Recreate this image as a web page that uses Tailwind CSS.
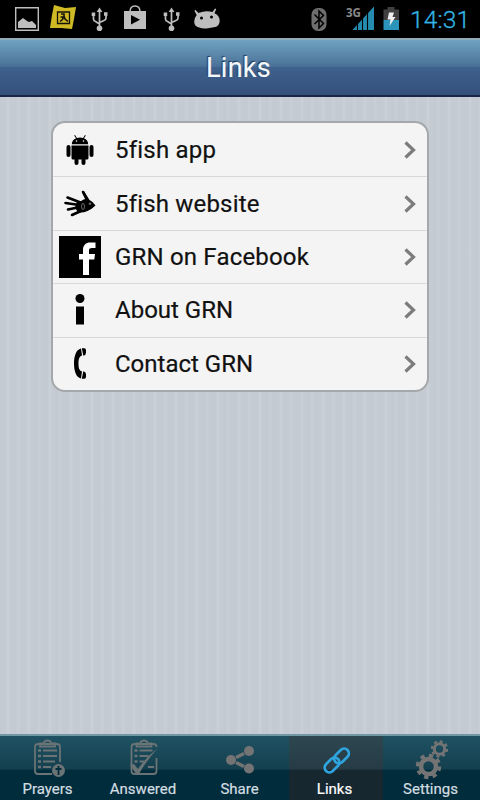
<!DOCTYPE html>
<html lang="en" class="bg-black">
<head>
  <meta charset="UTF-8" />
  <meta name="viewport" content="width=device-width, initial-scale=1.0" />
  <title>Links</title>
  <script src="https://cdn.jsdelivr.net/npm/@tailwindcss/browser@4"></script>
</head>
<body class="w-[480px] h-[800px] flex flex-col overflow-hidden font-[Roboto,sans-serif]">

  <!-- Status bar -->
  <div class="h-[38px] shrink-0 bg-black flex">
    <svg class="w-[240px] h-[38px]" viewBox="0 0 240 38">
      <path d="M15.700 7.700h22.600v22.600H15.700z" fill="none" stroke="#bebebe" stroke-width="1.400" />
      <path d="M18 28v-6l5-4 4 3 2 1 3-1 4 4v3z" fill="#bebebe" />
      <path d="M54 5l11 3 11-1-2 12-2 10-11-1-11 0 2-13z" fill="#cfba25" />
      <path d="M57.500 12h12v11.500h-12z" fill="none" stroke="#15130a" stroke-width="1.300" />
      <path d="M61 14h3v2l1 3 3 2.500M63.500 16.500l-1 3-2.500 2M60.500 17h4" fill="none" stroke="#15130a" stroke-width="1.600" />
      <g id="usb" fill="none" stroke="#bebebe" stroke-width="1.700">
        <path d="M99.500 10v18M93.500 15v4q0 2 2 2.500l4 2.500M106 15v3q0 2-2 2.500l-4.500 2" />
        <path d="M96.600 12l2.900-4.500 2.900 4.500zM91.700 12.500h3.500V16h-3.500zM104 12.300h3.500v3.500H104z" fill="#bebebe" stroke="none" />
        <circle cx="99.500" cy="28.200" r="2.800" fill="#bebebe" stroke="none" />
      </g>
      <use href="#usb" x="72" />
      <path d="M124 11h22v18h-22z" fill="#bebebe" />
      <path d="M130 12q0-6 5-6t5 6" fill="none" stroke="#bebebe" stroke-width="1.500" />
      <path d="M131 15v9.500l9-4.700z" fill="#000" />
      <path d="M195.300 9.800l3.200 3.200q7-3 14-1l2.500-3.500 1.200.600-1.700 4.200q5 2.200 5.200 7.200 0 6.500-6 6.700-3 .3-5.500 1-5 1-9-.7-5-1-5-6 0-3.500 2.500-6.500l-2.200-4z" fill="#bebebe" />
      <circle cx="201.500" cy="18" r="1.500" fill="#000" />
      <circle cx="211.500" cy="17" r="1.500" fill="#000" />
    </svg>
    <svg class="w-[240px] h-[38px]" viewBox="240 0 240 38">
      <rect x="311.500" y="8" width="15" height="23" rx="6.500" fill="#6e6e6e" />
      <path d="M314.500 14.500l9 9-4.500 4.500V11l4.500 4.500-9 8.500" fill="none" stroke="#000" stroke-width="1.500" />
      <text x="346" y="17" font-family="Open Sans" font-weight="700" font-size="12" textLength="15" lengthAdjust="spacingAndGlyphs" fill="#888">3G</text>
      <path d="M352.500 30L374 6.500V30z" fill="#258caf" />
      <path d="M357.500 20v10M362.500 15v15M367.500 10v20" stroke="#000" stroke-width="1.100" />
      <path d="M383.500 9.500h4V7h7v2.500h4.500V20h-15.500z" fill="#404040" />
      <path d="M383.500 20H399v10h-15.500z" fill="#2b94ba" />
      <path d="M389 12.500h5l-1.500 4.500h3l-6 9 1-6.500h-3z" fill="#eee" />
      <text x="410" y="28" font-family="Roboto" font-weight="300" font-size="24.500" textLength="60" lengthAdjust="spacing" fill="#33b5e5" stroke="#33b5e5" stroke-width=".3">14:31</text>
    </svg>
  </div>

  <!-- Header -->
  <header class="h-[59px] shrink-0 flex items-center justify-center pt-[2px] pr-[3px] border-t-2 border-t-[#91abb7] border-b-2 border-b-[#1b2547] bg-linear-[180deg,#6fa3bf_0%,#4a7199_48%,#3f618d_50%,#33507a_100%]">
    <h1 class="text-[27px] leading-none tracking-[0.3px] text-[#f3f8fb] [-webkit-text-stroke:0.15px_#f3f8fb] [text-shadow:-1px_-1px_1px_#22344e]">Links</h1>
  </header>

  <!-- Link list -->
  <main class="flex-1 pt-6 px-[51px] bg-[repeating-linear-gradient(90deg,#c3cad2_0px,#c4cbd3_6px,#cad1d9_8px,#c4cbd3_10px,#c3cad2_16px,#c8cfd7_18px,#c3cad2_21px)]">
    <ul class="h-[271px] pt-px rounded-[14px] border-2 border-[#a5a8aa] bg-[#f4f4f4] flex flex-col overflow-hidden divide-y divide-[#d8d8d8] text-[24px] text-[#111] [-webkit-text-stroke:0.2px_#111]">
      <li class="flex-1 flex items-center pl-[6px] pr-[11px]">
        <svg class="w-[42px] h-[42px]" viewBox="0 0 42 42">
          <path d="M12.500 16.500h17V29a1.500 1.500 0 0 1-1.500 1.500h-1.500V34a2 2 0 0 1-4 0v-3.500h-3V34a2 2 0 0 1-4 0v-3.500H14a1.500 1.500 0 0 1-1.500-1.500zM12.800 15.300c0-3 1.700-5 4.200-6l-1.800-2.800.8-.4 1.900 2.900q3.100-1 6.200 0L26 6.100l.8.400L25 9.300c2.500 1 4.200 3 4.200 6z" />
          <rect x="7.500" y="16" width="4" height="12" rx="2" />
          <rect x="30.500" y="16" width="4" height="12" rx="2" />
          <circle cx="17.500" cy="12" r=".8" fill="#f4f4f4" />
          <circle cx="24.500" cy="12" r=".8" fill="#f4f4f4" />
        </svg>
        <span class="ml-[14px] flex-1 tracking-[0.22px]">5fish app</span>
        <svg class="w-3 h-[18px]" viewBox="0 0 12 18"><path d="M1.500 1.500L9.500 9l-8 7.500" fill="none" stroke="#7c7c7c" stroke-width="3.200" /></svg>
      </li>
      <li class="flex-1 flex items-center pl-[6px] pr-[11px]">
        <svg class="w-[42px] h-[42px]" viewBox="0 0 42 42">
          <path d="M24 9l4 8M8.500 14.500l13 5M6.500 20l14 2M9 26.500l12-2.500M13 32l10-4.500" fill="none" stroke="#000" stroke-width="2.600" stroke-linecap="round" />
          <path d="M18 18.500q4 .5 6.500-2l2-.5-3.500-7 2-1 5.500 9q3.500 1.500 6 5.500-3.500 3.500-8 5.500-4 2-9.500 1.500l-3-5z" />
          <ellipse cx="24" cy="23.500" rx="1.500" ry="3" fill="none" stroke="#999" stroke-width=".7" />
          <circle cx="31" cy="20.700" r=".8" fill="none" stroke="#ccc" stroke-width=".6" />
        </svg>
        <span class="ml-[14px] flex-1 tracking-[0.18px]">5fish website</span>
        <svg class="w-3 h-[18px]" viewBox="0 0 12 18"><path d="M1.500 1.500L9.500 9l-8 7.500" fill="none" stroke="#7c7c7c" stroke-width="3.200" /></svg>
      </li>
      <li class="flex-1 flex items-center pl-[6px] pr-[11px]">
        <svg class="w-[42px] h-[42px]" viewBox="0 0 42 42">
          <path d="M0 0h42v42H0z" />
          <path d="M24 39V23.500h-4V18h4v-4c0-5 3-7.500 7-7.500h5.500V12H33c-2 0-3 .7-3 2.500V18h6l-.7 5.500H30V39z" fill="#fff" />
        </svg>
        <span class="ml-[14px] flex-1 tracking-[0.18px]">GRN on Facebook</span>
        <svg class="w-3 h-[18px]" viewBox="0 0 12 18"><path d="M1.500 1.500L9.500 9l-8 7.500" fill="none" stroke="#7c7c7c" stroke-width="3.200" /></svg>
      </li>
      <li class="flex-1 flex items-center pl-[6px] pr-[11px]">
        <svg class="w-[42px] h-[42px]" viewBox="0 0 42 42">
          <circle cx="21" cy="9.500" r="4.500" />
          <path d="M17 17.500h8v18h-8z" />
        </svg>
        <span class="ml-[14px] flex-1">About GRN</span>
        <svg class="w-3 h-[18px]" viewBox="0 0 12 18"><path d="M1.500 1.500L9.500 9l-8 7.500" fill="none" stroke="#7c7c7c" stroke-width="3.200" /></svg>
      </li>
      <li class="flex-1 flex items-center pl-[6px] pr-[11px]">
        <svg class="w-[42px] h-[42px]" viewBox="0 0 42 42">
          <path d="M22 5.500c-5 1-7 8-7 15s2 14 7 15l1-7c-3-1-3.500-4-3.500-8s.5-7 3.500-8z" />
          <path d="M22.800 5.300h2.500q1.700 0 1.700 2v2.500q0 2.500-2.700 3zM22.800 35.700h2.500q1.700 0 1.700-2v-2.500q0-2.500-2.700-3z" />
        </svg>
        <span class="ml-[14px] flex-1">Contact GRN</span>
        <svg class="w-3 h-[18px]" viewBox="0 0 12 18"><path d="M1.500 1.500L9.500 9l-8 7.500" fill="none" stroke="#7c7c7c" stroke-width="3.200" /></svg>
      </li>
    </ul>
  </main>

  <!-- Tab bar -->
  <nav class="h-[66px] shrink-0 grid grid-cols-5 border-t-2 border-t-[#7397a5] bg-linear-[180deg,#1f5263_0%,#143f4e_52%,#002c3b_53%,#002c3b_100%] text-[15px] leading-none text-[#d3dde1] [-webkit-text-stroke:0.2px]">
    <a class="flex flex-col items-center">
      <svg class="w-[96px] h-[46px] shrink-0" viewBox="0 736 96 46" fill="none" stroke="#6a7375" stroke-width="1.800">
        <path d="M52 774H38q-3 0-3-3v-24q0-3 3-3h19q3 0 3 3v15" />
        <path d="M40 746.500v-3h4q0-3 3.500-3t3.500 3h4v3z" />
        <path d="M38 750.500h3M38 756h3M38 761.500h3M38 767h3" stroke-width="2.500" />
        <path d="M43 750.500h14M43 756h14M43 761.500h12M43 767h8" />
        <circle cx="58.500" cy="770.500" r="6.500" fill="#6a7375" stroke="none" />
        <path d="M58.500 766v9M55.500 769h6" stroke="#002c3b" />
      </svg>
      <span class="pr-px">Prayers</span>
    </a>
    <a class="flex flex-col items-center">
      <svg class="w-[96px] h-[46px] shrink-0" viewBox="96 736 96 46" fill="none" stroke="#6a7375" stroke-width="1.800">
        <path d="M156.500 758v13q0 3-3 3h-19q-3 0-3-3v-24q0-3 3-3h19q3 0 3 3" />
        <path d="M136.500 746.500v-3h4q0-3 3.500-3t3.500 3h4v3z" />
        <path d="M134.500 750.500h3M134.500 756h3M134.500 761.500h3" stroke-width="2.500" />
        <path d="M139.500 750.500h13M139.500 756h9M139.500 761.500h5M148 767h6" />
        <path d="M130 765l4-1 4 5q8-12 20-21-12 13-19 26h-3z" fill="#6a7375" stroke="none" />
      </svg>
      <span class="pr-[2px]">Answered</span>
    </a>
    <a class="flex flex-col items-center">
      <svg class="w-[96px] h-[46px] shrink-0" viewBox="192 736 96 46" fill="#747474" stroke="#747474">
        <path d="M236 757.500l8-4M236 762.500l8 4" stroke-width="3.500" />
        <circle cx="231" cy="760" r="5" stroke="none" />
        <circle cx="249" cy="751" r="5" stroke="none" />
        <circle cx="249" cy="768.500" r="5" stroke="none" />
      </svg>
      <span class="pr-px">Share</span>
    </a>
    <a class="flex flex-col items-center mx-px bg-linear-[180deg,#2d4750_0%,#263b45_52%,#16272f_53%,#16272f_100%] text-white">
      <svg class="w-[96px] h-[46px] shrink-0" viewBox="288 736 96 46" fill="none" stroke="#2fa5df" stroke-width="2.600">
        <rect x="-8.500" y="-4.800" width="17" height="9.600" rx="4.800" transform="translate(332 765) rotate(-45)" />
        <rect x="-8.500" y="-4.800" width="17" height="9.600" rx="4.800" transform="translate(341.500 756) rotate(-45)" />
      </svg>
      <span class="pr-[3px]">Links</span>
    </a>
    <a class="flex flex-col items-center">
      <svg class="w-[96px] h-[46px] shrink-0" viewBox="384 736 96 46" fill="none" stroke="#747474">
        <circle cx="428.500" cy="766.500" r="7.500" stroke-width="4.500" />
        <circle cx="428.500" cy="766.500" r="11" stroke-width="3.500" stroke-dasharray="4.320 4.320" />
        <circle cx="439.500" cy="749" r="5.200" stroke-width="3" />
        <circle cx="439.500" cy="749" r="7.500" stroke-width="2.400" stroke-dasharray="2.945 2.945" />
      </svg>
      <span class="pr-[3px]">Settings</span>
    </a>
  </nav>

</body>
</html>
